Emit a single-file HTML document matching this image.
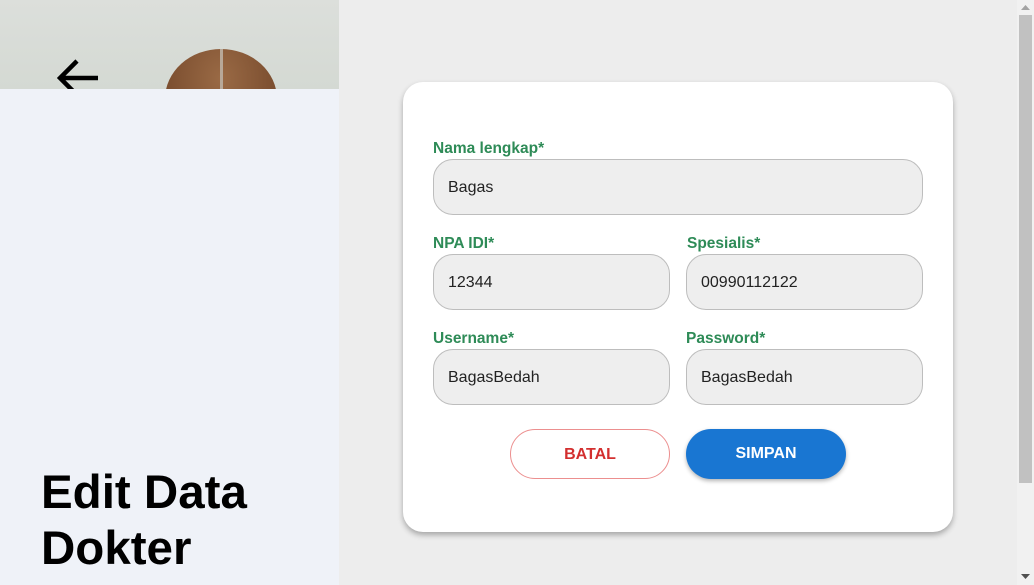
<!DOCTYPE html>
<html><head><style>
*{margin:0;padding:0;box-sizing:border-box}
body{width:1034px;height:585px;overflow:hidden;background:#ededed;font-family:"Liberation Sans",Arial,sans-serif;position:relative}
.left{position:absolute;left:0;top:0;width:339px;height:585px;background:#eff2f8}
.img{position:absolute;left:0;top:0;width:339px;height:89px;background:linear-gradient(#dcdfdb,#d4d9d3);overflow:hidden}
.hair{position:absolute;left:165px;top:49px;width:112px;height:100px;border-radius:50% 50% 0 0;background:radial-gradient(ellipse at 50% 30%,#9a6a45,#6e4226)}
.hair:after{content:"";position:absolute;left:55px;top:0;width:3px;height:40px;background:#b8a898}
h1{position:absolute;left:41px;top:465px;font-size:47.5px;line-height:56px;font-weight:bold;color:#000}
.card{position:absolute;left:403px;top:82px;width:550px;height:450px;background:#fff;border-radius:20px;box-shadow:0 3px 6px rgba(0,0,0,.3)}
label{position:absolute;font-size:15.5px;font-weight:bold;color:#2e8b57}
.in{position:absolute;height:56px;background:#eeeeee;border:1px solid #bdbdbd;border-radius:20px;font-size:16px;color:#222;padding:19px 14px}
.btn{position:absolute;top:347px;width:160px;height:50px;border-radius:25px;font-size:16px;font-weight:bold;text-align:center;line-height:50px}
.sb{position:absolute;left:1017px;top:0;width:17px;height:585px;background:#f1f1f1}
.th{position:absolute;left:2px;top:15px;width:13px;height:468px;background:#c1c1c1}
</style></head><body>
<div class="left"><div class="img"><div class="hair"></div>
<svg style="position:absolute;left:57px;top:58px" width="42" height="40" viewBox="0 0 42 40"><path d="M41 20H4M20 3L3 20L20 37" fill="none" stroke="#000" stroke-width="4.5"/></svg></div>
<h1>Edit Data<br>Dokter</h1></div>
<div class="card">
<label style="left:30px;top:58px">Nama lengkap*</label>
<div class="in" style="left:30px;top:77px;width:490px">Bagas</div>
<label style="left:284px;top:153px">Spesialis*</label>
<label style="left:30px;top:153px">NPA IDI*</label>
<div class="in" style="left:30px;top:172px;width:237px">12344</div>
<div class="in" style="left:283px;top:172px;width:237px">00990112122</div>
<label style="left:30px;top:248px">Username*</label>
<div class="in" style="left:30px;top:267px;width:237px">BagasBedah</div>
<label style="left:283px;top:248px">Password*</label>
<div class="in" style="left:283px;top:267px;width:237px">BagasBedah</div>
<div class="btn" style="left:107px;border:1px solid #ec8f8f;color:#d32f2f;background:#fff">BATAL</div>
<div class="btn" style="left:283px;background:#1976d2;color:#fff;box-shadow:0 2px 4px rgba(0,0,0,.3)">SIMPAN</div>
</div>
<div class="sb"><div class="th"></div>
<svg style="position:absolute;left:4px;top:5px" width="9" height="5"><path d="M0 5L4.5 0L9 5Z" fill="#a3a3a3"/></svg>
<svg style="position:absolute;left:4px;top:574px" width="9" height="5"><path d="M0 0L4.5 5L9 0Z" fill="#505050"/></svg></div>
</body></html>
